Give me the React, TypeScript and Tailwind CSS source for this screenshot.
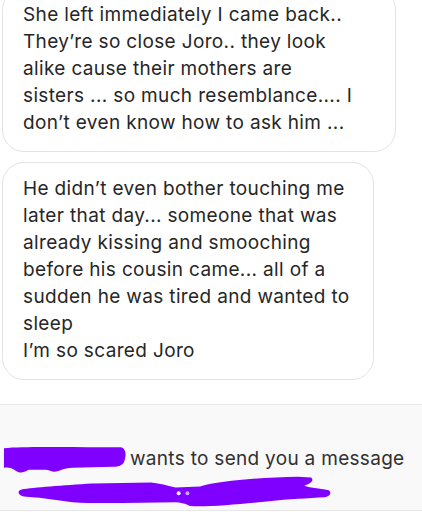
const Scribbles = () => (
  <svg
    className="absolute left-0 top-0 h-full w-full"
    viewBox="0 0 422 107"
    fill="none"
  >
    {/* first scribble, over the sender name */}
    <path
      d="M0 44 C20 42 60 43 100 43 L119 43 C124 44 125 50 123 56 C122 61 118 63 110 63 L70 64 C62 64 58 67 52 68 C48 68 46 66 42 66 L25 66 C20 69 16 70 12 67 C8 64 4 63 0 64 Z"
      fill="#8000ff"
    />
    {/* second scribble, over the preview line */}
    <path
      d="M18 86 C30 84 60 82 90 80 L150 79 C160 80 165 82 175 84 L200 83 C220 77 260 74 300 73 L313 74 C316 76 314 80 306 82 C312 85 325 85 331 87 C334 89 333 93 327 94 C310 95 290 96 270 98 C240 101 210 104 190 103 C185 101 185 100 175 99 C140 99 100 101 70 99 C60 98 50 96 40 95 C30 94 20 94 17 92 C14 90 14 87 18 86 Z"
      fill="#8000ff"
    />
    <circle cx="178" cy="90" r="2" fill="#ffffff" />
    <circle cx="187" cy="90" r="2" fill="#c9a3ff" />
  </svg>
);

const Bubble = ({ lines, width }: { lines: string[]; width: string }) => (
  <div
    className={`${width} rounded-[22px] border border-[#e3e3e3] bg-white pl-[20px] pr-4 pt-3 pb-[15px]`}
  >
    {lines.map((line) => (
      <p
        key={line}
        className="whitespace-nowrap text-[19px] leading-[27px] tracking-[0.35px] text-[#262626]"
      >
        {line}
      </p>
    ))}
  </div>
);

export default function App() {
  return (
    <div
      className="h-[515px] w-[422px] overflow-hidden bg-white"
      style={{ fontFamily: 'Inter, "Noto Sans", sans-serif' }}
    >
      <div className="-mt-3 flex flex-col gap-[10px] pl-[2px]">
        <Bubble
          width="w-[394px]"
          lines={[
            'She left immediately I came back..',
            'They’re so close Joro.. they look',
            'alike cause their mothers are',
            'sisters ... so much resemblance.... I',
            'don’t even know how to ask him ...',
          ]}
        />
        <Bubble
          width="w-[372px]"
          lines={[
            'He didn’t even bother touching me',
            'later that day... someone that was',
            'already kissing and smooching',
            'before his cousin came... all of a',
            'sudden he was tired and wanted to',
            'sleep',
            'I’m so scared Joro',
          ]}
        />
      </div>

      {/* message request bar */}
      <div className="relative mt-[24px] h-[107px] border-y border-[#e8e8e8] bg-[#f9f9f9]">
        <p className="pl-[130px] pt-[42px] text-[19px] leading-[24px] tracking-[0.3px] text-[#303030]">
          wants to send you a message
        </p>
        <Scribbles />
      </div>
    </div>
  );
}
